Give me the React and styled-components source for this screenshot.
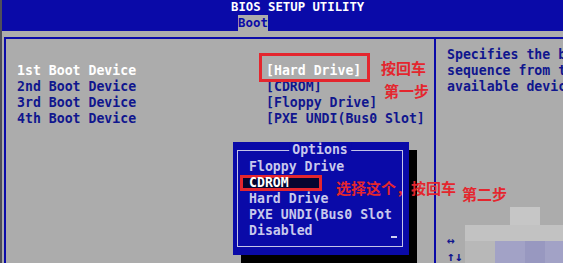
import styled, { createGlobalStyle } from "styled-components";

const GlobalStyle = createGlobalStyle`
  html, body {
    margin: 0;
    padding: 0;
    overflow: hidden;
    background: #acacac;
  }
`;

const mono = `"DejaVu Sans Mono", "Liberation Mono", monospace`;
const cjk = `"Noto Sans CJK SC", "Noto Sans", sans-serif`;
const blue = "#0a0aa8";
const ink = "#10168e";
const red = "#e4262e";

const bootRows = [
    { label: "1st Boot Device", value: "[Hard Drive]", active: true },
    { label: "2nd Boot Device", value: "[CDROM]" },
    { label: "3rd Boot Device", value: "[Floppy Drive]" },
    { label: "4th Boot Device", value: "[PXE UNDI(Bus0 Slot]" },
];

const options = ["Floppy Drive", "CDROM", "Hard Drive", "PXE UNDI(Bus0 Slot", "Disabled"];

// blurred corner of the original photo: [x, y, width, height, colour]
const mosaic = [
    [45, 0, 30, 18, "#c6c6c6"],
    [0, 18, 98, 16, "#c2c2c2"],
    [0, 34, 30, 26, "#b8b8b8"],
    [30, 34, 68, 26, "#a2a2c6"],
    [60, 34, 20, 26, "#9898c0"],
];

export default function App() {
    return (
        <Screen>
            <GlobalStyle />
            <Header>
                <Title>BIOS SETUP UTILITY</Title>
                <Tab>Boot</Tab>
            </Header>
            <Body>
                <Panel>
                    <Main>
                        {bootRows.map((row) => (
                            <Row key={row.label}>
                                <Cell $active={row.active}>{row.label}</Cell>
                                <Cell $active={row.active}>{row.value}</Cell>
                            </Row>
                        ))}
                    </Main>
                    <Help>
                        <HelpText>Specifies the boot</HelpText>
                        <HelpText>sequence from the</HelpText>
                        <HelpText>available devices.</HelpText>
                        <Keys>
                            <HelpText>↔</HelpText>
                            <HelpText>↑↓</HelpText>
                        </Keys>
                    </Help>
                </Panel>
            </Body>

            <Popup>
                <Frame>
                    <FrameTitle>Options</FrameTitle>
                    {options.map((opt) => (
                        <Option key={opt} $selected={opt === "CDROM"}>
                            {opt}
                        </Option>
                    ))}
                    <ScrollMark />
                </Frame>
            </Popup>

            <Mark />
            <Note $x={379} $y={58}>按回车</Note>
            <Note $x={382} $y={81}>第一步</Note>
            <Note $x={334} $y={178}>选择这个，按回车</Note>
            <Note $x={460} $y={184}>第二步</Note>

            <Mosaic width="98" height="60" viewBox="0 0 98 60">
                {mosaic.map(([x, y, w, h, fill], i) => (
                    <rect key={i} x={x} y={y} width={w} height={h} fill={fill} />
                ))}
            </Mosaic>
        </Screen>
    );
}

const Screen = styled.div`
    position: relative;
    width: 563px;
    height: 263px;
    box-sizing: border-box;
    border-left: 2px solid #4e4e5a;
    overflow: hidden;
    display: flex;
    flex-direction: column;
    background: #acacac;
    font-family: ${mono};
`;

const Header = styled.div`
    height: 31px;
    flex-shrink: 0;
    background: ${blue};
    display: flex;
    flex-direction: column;
    align-items: flex-start;
`;

const Title = styled.div`
    margin: 1px 0 0 229px;
    color: #ffffff;
    font-size: 12.3px;
    font-weight: bold;
    line-height: 13px;
`;

const Tab = styled.div`
    margin: 1px 0 0 236px;
    width: 30px;
    height: 16px;
    background: #acacac;
    color: ${blue};
    font-size: 12.4px;
    font-weight: bold;
    line-height: 16px;
    text-align: center;
`;

const Body = styled.div`
    flex: 1;
    padding: 6px 0 0 2px;
    display: flex;
    min-height: 0;
`;

const Panel = styled.div`
    flex: 1;
    display: flex;
    min-width: 0;
    border-top: 2px solid ${blue};
    border-left: 2px solid ${blue};
`;

const Main = styled.div`
    width: 430px;
    flex-shrink: 0;
    box-sizing: border-box;
    padding: 24px 0 0 11px;
    border-right: 2px solid ${blue};
`;

const Row = styled.div`
    display: grid;
    grid-template-columns: 249px auto;
    height: 16px;
`;

const Cell = styled.span`
    color: ${(props) => (props.$active ? "#ffffff" : ink)};
    font-size: 13.2px;
    font-weight: bold;
    line-height: 16px;
    white-space: pre;
`;

const Help = styled.div`
    flex: 1;
    min-width: 0;
    display: flex;
    flex-direction: column;
    padding: 8px 0 0 11px;
    overflow: hidden;
`;

const HelpText = styled.div`
    color: ${ink};
    font-size: 13.2px;
    font-weight: bold;
    line-height: 16px;
    white-space: pre;
`;

const Keys = styled.div`
    margin-top: auto;
    margin-bottom: -2px;
`;

const Popup = styled.div`
    position: absolute;
    left: 231px;
    top: 142px;
    width: 176px;
    height: 113px;
    box-sizing: border-box;
    padding: 8px 6px 8px 4px;
    background: ${blue};
    box-shadow: 8px 8px 0 #000000;
    display: flex;
`;

const Frame = styled.div`
    position: relative;
    flex: 1;
    border: 1px solid #c4c4e8;
    padding: 8px 0 0 11px;
`;

const FrameTitle = styled.div`
    position: absolute;
    top: -9px;
    left: 50%;
    transform: translateX(-50%);
    padding: 0 3px;
    background: ${blue};
    color: #c8c8ec;
    font-size: 13.2px;
    font-weight: bold;
    line-height: 16px;
`;

const Option = styled.div`
    width: ${(props) => (props.$selected ? "82px" : "auto")};
    margin-left: ${(props) => (props.$selected ? "-9px" : "0")};
    padding-left: ${(props) => (props.$selected ? "9px" : "0")};
    box-sizing: border-box;
    height: 16px;
    color: ${(props) => (props.$selected ? "#ffffff" : "#c8c8ec")};
    background: ${(props) => (props.$selected ? "#050530" : "transparent")};
    box-shadow: ${(props) => (props.$selected ? `inset 0 0 0 3px ${red}` : "none")};
    font-size: 13.2px;
    font-weight: bold;
    line-height: 16px;
    white-space: pre;
`;

const ScrollMark = styled.div`
    position: absolute;
    right: 5px;
    bottom: 8px;
    width: 6px;
    height: 2px;
    background: #d0d0f0;
`;

const Mark = styled.div`
    position: absolute;
    left: 257px;
    top: 53px;
    width: 111px;
    height: 29px;
    box-sizing: border-box;
    border: 3px solid ${red};
`;

const Note = styled.div`
    position: absolute;
    left: ${(props) => props.$x}px;
    top: ${(props) => props.$y}px;
    color: ${red};
    font-family: ${cjk};
    font-size: 15px;
    font-weight: bold;
    line-height: 20px;
    white-space: nowrap;
`;

const Mosaic = styled.svg`
    position: absolute;
    left: 463px;
    top: 207px;
`;
